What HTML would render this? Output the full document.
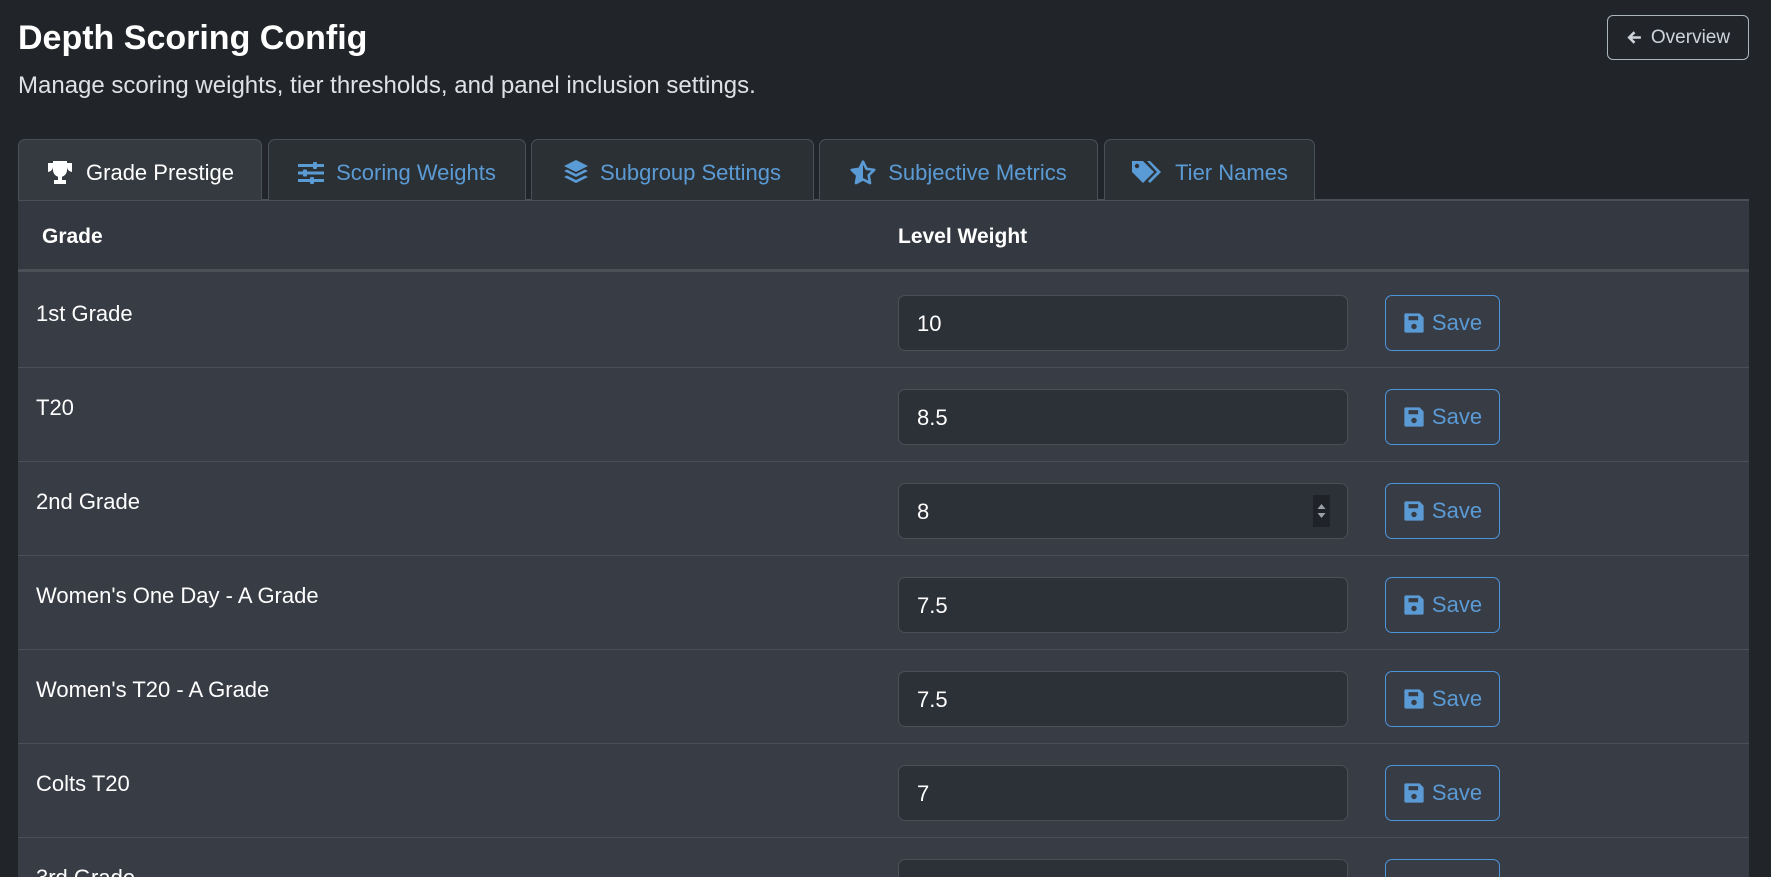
<!DOCTYPE html>
<html><head><meta charset="utf-8"><style>
*{box-sizing:border-box;margin:0;padding:0}
html{width:1771px;height:877px;overflow:hidden;background:#212529}
body{width:1771px;height:877px;overflow:hidden;background:#212529;font-family:"Liberation Sans",sans-serif;color:#e9ecef;position:relative}
.abs{position:absolute}
h1{position:absolute;left:18px;top:19px;font-size:34px;font-weight:bold;color:#fff}
.sub{left:18px;top:72px;font-size:24px;color:#dee2e6}
.ov{left:1607px;top:15px;width:142px;height:45px;border:1px solid #adb5bd;border-radius:6px;color:#ced4da;font-size:19px;display:flex;align-items:center;justify-content:center;gap:8px}
.tab{top:139px;height:61px;padding-top:6px;border:1px solid #495057;border-bottom:none;border-radius:7px 7px 0 0;background:#2b3035;color:#5b9bd5;font-size:22px;display:flex;align-items:center;justify-content:center;gap:12px}
.tab.act{background:#343a40;color:#fff}
.panel{left:18px;top:199px;width:1731px;height:678px;background:#383c45;border-top:2px solid #4b5057}
.hdr{left:18px;top:201px;width:1731px;height:71px;background:#343941;border-bottom:3px solid #4b5057}
.hdr span{position:absolute;top:24px;font-size:21px;font-weight:bold;color:#fff}
.row{left:18px;width:1731px;height:94px;border-bottom:1px solid #4b5057;overflow:hidden}
.row .lbl{position:absolute;left:18px;top:27px;font-size:22px;color:#fff}
.inp{position:absolute;left:880px;top:21px;width:450px;height:56px;border:1px solid #495057;border-radius:7px;background:#2c3037;font-size:22px;color:#fff;padding:15px 0 0 18px}
.btn{position:absolute;left:1367px;top:21px;width:115px;height:56px;border:1px solid #4d94db;border-radius:7px;color:#5b9bd5;font-size:22px;display:flex;align-items:center;justify-content:center;gap:7px}
.spin{position:absolute;right:17px;top:11px;width:17px;height:32px;background:#1f2226}
</style></head><body>
<h1>Depth Scoring Config</h1>
<div class="abs sub">Manage scoring weights, tier thresholds, and panel inclusion settings.</div>
<div class="abs ov"><svg width="17" height="17" viewBox="0 0 16 16"><path d="M14 8H3M8 3L3 8l5 5" stroke="#ced4da" stroke-width="2.4" fill="none"/></svg>Overview</div>

<div class="abs panel"></div>
<div class="abs tab act" style="left:18px;width:244px"><svg width="28" height="26" viewBox="0 0 28 26"><path d="M7 1h14v9a7 7 0 0 1-14 0z M2 3h5v3c0 3 -1 5 -5 6z M26 3h-5v3c0 3 1 5 5 6z M12 16h4v4h4v4H8v-4h4z" fill="#fff"/></svg>Grade Prestige</div>
<div class="abs tab" style="left:268px;width:258px"><svg width="26" height="22" viewBox="0 0 26 22"><g fill="#5b9bd5"><rect x="0" y="2" width="26" height="3"/><rect x="0" y="9.5" width="26" height="3"/><rect x="0" y="17" width="26" height="3"/><rect x="15" y="0" width="4" height="7" rx="1"/><rect x="5" y="7.5" width="4" height="7" rx="1"/><rect x="12" y="15" width="4" height="7" rx="1"/></g></svg>Scoring Weights</div>
<div class="abs tab" style="left:531px;width:283px"><svg width="24" height="26" viewBox="0 0 24 26"><path d="M12 0l12 6-12 6L0 6z M0 11l3-1.5 9 4.5 9-4.5 3 1.5-12 6z M0 17l3-1.5 9 4.5 9-4.5 3 1.5-12 6z" fill="#5b9bd5"/></svg>Subgroup Settings</div>
<div class="abs tab" style="left:819px;width:279px"><svg width="26" height="26" viewBox="0 0 24 24"><path d="M12 1.5l3.2 6.6 7.2 1-5.2 5 1.3 7.2L12 17.9l-6.5 3.4 1.3-7.2-5.2-5 7.2-1z" fill="none" stroke="#5b9bd5" stroke-width="2.4" stroke-linejoin="round"/><path d="M12 1.5v16.4l-6.5 3.4 1.3-7.2-5.2-5 7.2-1z" fill="#5b9bd5"/></svg>Subjective Metrics</div>
<div class="abs tab" style="left:1104px;width:211px"><svg width="32" height="26" viewBox="0 0 32 26"><path d="M1 1h11l11 11-11 11L1 12z" fill="#5b9bd5"/><circle cx="6" cy="6" r="2.2" fill="#2b3035"/><path d="M16 1h3l11 11-11 11-2-2 9-9z" fill="#5b9bd5"/></svg>Tier Names</div>

<div class="abs hdr"><span style="left:24px">Grade</span><span style="left:880px">Level Weight</span></div>

<div class="abs row" style="top:274px"><div class="lbl">1st Grade</div><div class="inp">10</div><div class="btn"><svg width="22" height="22" viewBox="0 0 16 16"><path d="M2 1h10l3 3v10a1 1 0 0 1-1 1H2a1 1 0 0 1-1-1V2a1 1 0 0 1 1-1z" fill="#5b9bd5"/><rect x="4" y="3" width="7" height="3" fill="#383c45"/><circle cx="8" cy="10.5" r="2" fill="#383c45"/></svg>Save</div></div>
<div class="abs row" style="top:368px"><div class="lbl">T20</div><div class="inp">8.5</div><div class="btn"><svg width="22" height="22" viewBox="0 0 16 16"><path d="M2 1h10l3 3v10a1 1 0 0 1-1 1H2a1 1 0 0 1-1-1V2a1 1 0 0 1 1-1z" fill="#5b9bd5"/><rect x="4" y="3" width="7" height="3" fill="#383c45"/><circle cx="8" cy="10.5" r="2" fill="#383c45"/></svg>Save</div></div>
<div class="abs row" style="top:462px"><div class="lbl">2nd Grade</div><div class="inp">8<div class="spin"><svg width="17" height="32" viewBox="0 0 17 32"><path d="M8.5 9l4 5h-8z M8.5 23l4-5h-8z" fill="#9aa0a6"/></svg></div></div><div class="btn"><svg width="22" height="22" viewBox="0 0 16 16"><path d="M2 1h10l3 3v10a1 1 0 0 1-1 1H2a1 1 0 0 1-1-1V2a1 1 0 0 1 1-1z" fill="#5b9bd5"/><rect x="4" y="3" width="7" height="3" fill="#383c45"/><circle cx="8" cy="10.5" r="2" fill="#383c45"/></svg>Save</div></div>
<div class="abs row" style="top:556px"><div class="lbl">Women's One Day - A Grade</div><div class="inp">7.5</div><div class="btn"><svg width="22" height="22" viewBox="0 0 16 16"><path d="M2 1h10l3 3v10a1 1 0 0 1-1 1H2a1 1 0 0 1-1-1V2a1 1 0 0 1 1-1z" fill="#5b9bd5"/><rect x="4" y="3" width="7" height="3" fill="#383c45"/><circle cx="8" cy="10.5" r="2" fill="#383c45"/></svg>Save</div></div>
<div class="abs row" style="top:650px"><div class="lbl">Women's T20 - A Grade</div><div class="inp">7.5</div><div class="btn"><svg width="22" height="22" viewBox="0 0 16 16"><path d="M2 1h10l3 3v10a1 1 0 0 1-1 1H2a1 1 0 0 1-1-1V2a1 1 0 0 1 1-1z" fill="#5b9bd5"/><rect x="4" y="3" width="7" height="3" fill="#383c45"/><circle cx="8" cy="10.5" r="2" fill="#383c45"/></svg>Save</div></div>
<div class="abs row" style="top:744px"><div class="lbl">Colts T20</div><div class="inp">7</div><div class="btn"><svg width="22" height="22" viewBox="0 0 16 16"><path d="M2 1h10l3 3v10a1 1 0 0 1-1 1H2a1 1 0 0 1-1-1V2a1 1 0 0 1 1-1z" fill="#5b9bd5"/><rect x="4" y="3" width="7" height="3" fill="#383c45"/><circle cx="8" cy="10.5" r="2" fill="#383c45"/></svg>Save</div></div>
<div class="abs row" style="top:838px;height:39px;border-bottom:none"><div class="lbl">3rd Grade</div><div class="inp"></div><div class="btn"><svg width="22" height="22" viewBox="0 0 16 16"><path d="M2 1h10l3 3v10a1 1 0 0 1-1 1H2a1 1 0 0 1-1-1V2a1 1 0 0 1 1-1z" fill="#5b9bd5"/><rect x="4" y="3" width="7" height="3" fill="#383c45"/><circle cx="8" cy="10.5" r="2" fill="#383c45"/></svg>Save</div></div>
</body></html>
